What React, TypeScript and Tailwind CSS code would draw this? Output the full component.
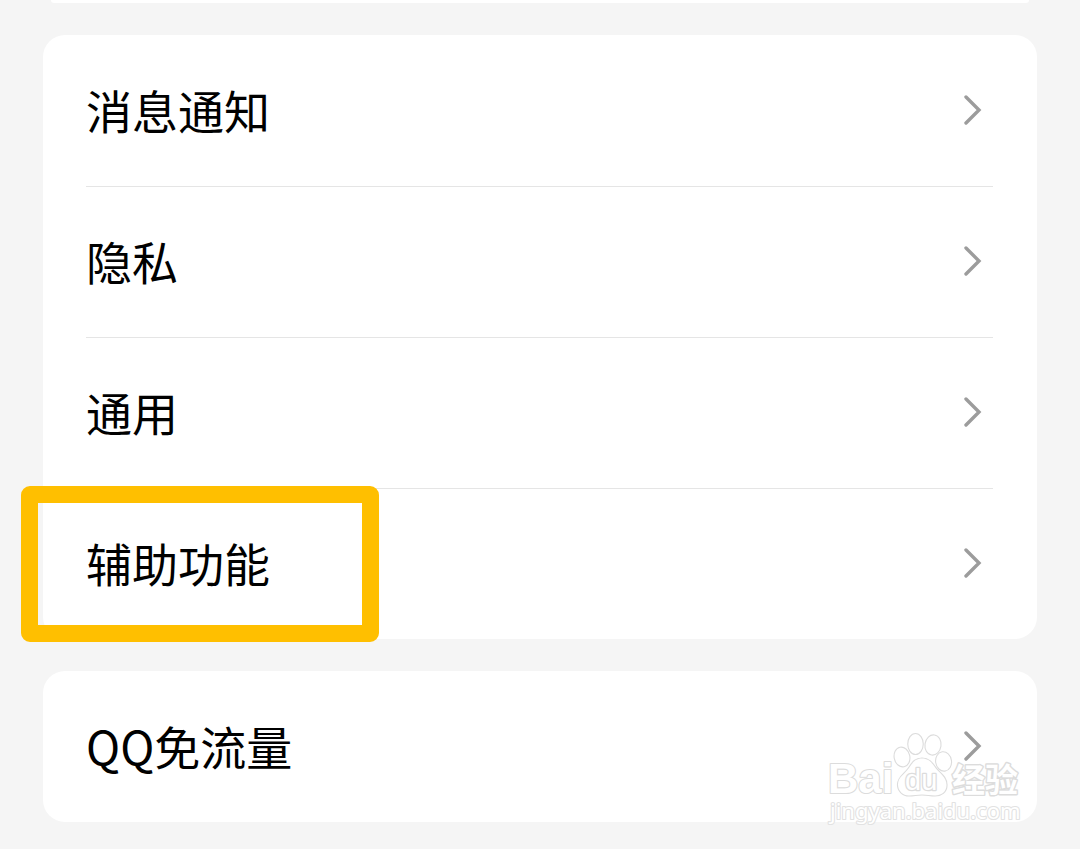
interface Item {
  label: string
  highlighted?: boolean
}

const groups: Item[][] = [
  [
    { label: "消息通知" },
    { label: "隐私" },
    { label: "通用" },
    { label: "辅助功能", highlighted: true },
  ],
  [{ label: "QQ免流量" }],
]

function Chevron() {
  return (
    <svg className="w-5 h-8 shrink-0" viewBox="0 0 20 32" fill="none" aria-hidden="true">
      <path d="M3 4 L16 17 L3 30" stroke="#9c9c9c" strokeWidth="3.4" strokeLinejoin="miter" strokeLinecap="round" />
    </svg>
  )
}

function SettingRow({ item, first }: { item: Item; first: boolean }) {
  return (
    <li className="relative pr-11 pl-[43px]">
      <button
        type="button"
        className={`flex h-[151px] w-full items-center justify-between pr-2.5 pb-1 text-left text-[46px] leading-[64px] text-black border-t ${
          first ? "border-transparent" : "border-[#e5e5e5]"
        }`}
      >
        <span>{item.label}</span>
        <Chevron />
      </button>
      {item.highlighted && (
        <div
          className="pointer-events-none absolute -top-0.5 -left-[22px] z-10 h-[156px] w-[358px] rounded-[9px] border-[17px] border-[#ffbf00]"
          aria-hidden="true"
        />
      )}
    </li>
  )
}

function Watermark() {
  return (
    <svg
      className="pointer-events-none absolute right-3 -bottom-1 h-24 w-[200px]"
      viewBox="0 0 200 96"
      fill="#ffffff"
      stroke="#dcdcdc"
      strokeWidth="2.2"
      strokeLinejoin="round"
      paintOrder="stroke"
      role="img"
      aria-label="Baidu"
    >
      <ellipse cx="77" cy="27" rx="7.3" ry="9.4" transform="rotate(-12 77 27)" />
      <ellipse cx="90.5" cy="14" rx="7.2" ry="10" />
      <ellipse cx="108" cy="15" rx="7.5" ry="9.6" transform="rotate(8 108 15)" />
      <ellipse cx="118.5" cy="31.5" rx="7.4" ry="9.2" transform="rotate(-8 118 31)" />
      <path d="M97 28.5 C104 28.5 107 33 110.5 38 C114 43 121.5 46.5 121.5 55 C121.5 62 116 65.500 110 65.5 C105 65.5 102 64.5 97 64.5 C92 64.5 89 65.5 84 65.5 C78 65.5 73 61 73 54.5 C73 47 80 44 84 38 C87.5 33 90 28.5 97 28.5 Z" />
      <text x="3" y="63" fontFamily="Liberation Sans" fontWeight="700" fontSize="42">Bai</text>
      <text x="80" y="60" fontFamily="Liberation Sans" fontSize="29" strokeWidth="2.6">du</text>
      <text x="127" y="62" fontFamily="Noto Sans CJK SC" fontWeight="700" fontSize="33" strokeWidth="2.8">经验</text>
      <text x="5" y="89" fontFamily="Noto Sans" fontSize="22" stroke="#e2e2e2">jingyan.baidu.com</text>
    </svg>
  )
}

export default function App() {
  return (
    <main className="min-h-screen overflow-x-hidden bg-[#f5f5f5] px-[43px] font-['Noto_Sans_CJK_SC',sans-serif]">
      <div className="flex flex-col gap-8">
        <div className="mx-2 h-[3px] rounded-b-3xl bg-white" />
        {groups.map((items, i) => (
          <section key={i} className="relative">
            <ul className="rounded-[22px] bg-white">
              {items.map((item, j) => (
                <SettingRow key={item.label} item={item} first={j === 0} />
              ))}
            </ul>
            {i === groups.length - 1 && <Watermark />}
          </section>
        ))}
      </div>
    </main>
  )
}
